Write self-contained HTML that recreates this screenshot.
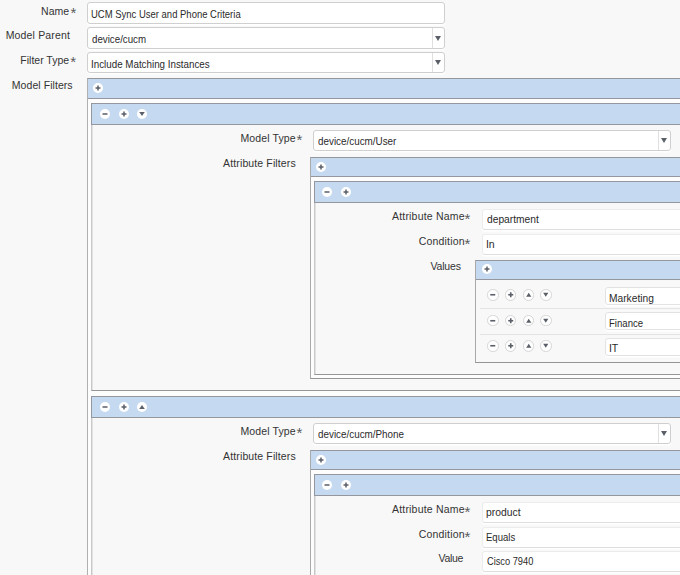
<!DOCTYPE html>
<html><head><meta charset="utf-8"><style>
html,body{margin:0;padding:0;}
body{width:680px;height:575px;overflow:hidden;position:relative;background:#f8f8f8;font-family:"Liberation Sans",sans-serif;}
body>div,body>span{position:absolute;box-sizing:border-box;}
.t{white-space:nowrap;line-height:1;}
.st{color:#5a5a5a;font-size:15px;line-height:1;white-space:nowrap;}
.inp{background:#fff;border:1px solid #cfcfcf;border-radius:3px;box-shadow:0 1px 0 #fff,0 2px 0 #fcfcfc;}
.box{width:700px;border:1px solid #a9a9a9;border-top-color:#94989e;border-right:none;}
.btn{background:#fff;border-radius:50%;}
.btn svg{display:block;}
.tri{width:0;height:0;border-left:3px solid transparent;border-right:3px solid transparent;border-top:5px solid #5b6068;}
</style></head><body>
<span class="t" style="left:41.10px;top:5.51px;font-size:10.5px;letter-spacing:0px;color:#333">Name</span>
<span class="st" style="left:70.40px;top:4.60px">*</span>
<span class="t" style="left:5.70px;top:30.11px;font-size:10.5px;letter-spacing:0.155px;color:#333">Model Parent</span>
<span class="t" style="left:20.30px;top:54.71px;font-size:10.5px;letter-spacing:0px;color:#333">Filter Type</span>
<span class="st" style="left:70.30px;top:53.90px">*</span>
<span class="t" style="left:11.80px;top:80.11px;font-size:10.5px;letter-spacing:0.058px;color:#333">Model Filters</span>
<div class="inp" style="left:87px;top:2px;width:358px;height:22px;border-color:#cfcfcf;"></div>
<span class="t" style="left:91.00px;top:9.01px;font-size:10.5px;color:#2a2a2a;transform:scaleX(0.903);transform-origin:0 0">UCM Sync User and Phone Criteria</span>
<div class="inp" style="left:87px;top:27px;width:358px;height:22px;border-color:#cfcfcf;"></div>
<div style="left:432px;top:28px;width:1px;height:20px;background:#e0e0e0"></div>
<div class="tri" style="left:435px;top:36px"></div>
<span class="t" style="left:91.90px;top:34.01px;font-size:10.5px;color:#2a2a2a;transform:scaleX(0.9267);transform-origin:0 0">device/cucm</span>
<div class="inp" style="left:87px;top:52px;width:358px;height:21px;border-color:#cfcfcf;"></div>
<div style="left:432px;top:53px;width:1px;height:19px;background:#e0e0e0"></div>
<div class="tri" style="left:435px;top:60px"></div>
<span class="t" style="left:90.97px;top:59.01px;font-size:10.5px;color:#2a2a2a;transform:scaleX(0.9325);transform-origin:0 0">Include Matching Instances</span>
<div class="box" style="left:87px;top:78px;height:700px;background:#fdfdfd;border-left-color:#b0b0b0;border-bottom-color:#959595;border-bottom:none;"></div>
<div style="left:88px;top:79px;width:700px;height:19px;background:#c5daf0"></div>
<div style="left:88px;top:98px;width:700px;height:1px;background:#94989e"></div>
<div class="btn" style="left:93.0px;top:83.0px;width:10px;height:10px;"><svg width="10" height="10"><rect x="2.5" y="4.25" width="5.0" height="1.5" fill="#5b6068"/><rect x="4.25" y="2.5" width="1.5" height="5.0" fill="#5b6068"/></svg></div>
<div class="box" style="left:91px;top:103px;height:288px;background:#f8f8f8;border-left-color:#c8c8c8;border-bottom-color:#969696;box-shadow:inset 1px 0 0 #e2e2e2;"></div>
<div style="left:92px;top:104px;width:700px;height:20px;background:#c5daf0"></div>
<div style="left:91px;top:103px;width:1px;height:22px;background:#94989e"></div>
<div style="left:92px;top:124px;width:700px;height:1px;background:#94989e"></div>
<div class="btn" style="left:100.0px;top:109.0px;width:10px;height:10px;"><svg width="10" height="10"><rect x="2.5" y="4.25" width="5.0" height="1.5" fill="#5b6068"/></svg></div>
<div class="btn" style="left:118.5px;top:109.0px;width:10px;height:10px;"><svg width="10" height="10"><rect x="2.5" y="4.25" width="5.0" height="1.5" fill="#5b6068"/><rect x="4.25" y="2.5" width="1.5" height="5.0" fill="#5b6068"/></svg></div>
<div class="btn" style="left:137.0px;top:109.0px;width:10px;height:10px;"><svg width="10" height="10"><path d="M2.2 3.0 L7.8 3.0 L5.0 7.0 Z" fill="#5b6068"/></svg></div>
<span class="t" style="left:240.50px;top:133.01px;font-size:10.5px;letter-spacing:0.12px;color:#333">Model Type</span>
<span class="st" style="left:296.40px;top:131.70px">*</span>
<div class="inp" style="left:313px;top:130px;width:358px;height:21px;border-color:#cfcfcf;"></div>
<div style="left:658px;top:131px;width:1px;height:19px;background:#e0e0e0"></div>
<div class="tri" style="left:661px;top:138px"></div>
<span class="t" style="left:318.30px;top:136.01px;font-size:10.5px;color:#2a2a2a;transform:scaleX(0.9386);transform-origin:0 0">device/cucm/User</span>
<span class="t" style="left:223.10px;top:158.01px;font-size:10.5px;letter-spacing:0.125px;color:#333">Attribute Filters</span>
<div class="box" style="left:310px;top:157px;height:222px;background:#fdfdfd;border-left-color:#a9a9a9;border-bottom-color:#959595;"></div>
<div style="left:311px;top:158px;width:700px;height:18px;background:#c5daf0"></div>
<div style="left:311px;top:176px;width:700px;height:1px;background:#94989e"></div>
<div class="btn" style="left:316.0px;top:161.5px;width:10px;height:10px;"><svg width="10" height="10"><rect x="2.5" y="4.25" width="5.0" height="1.5" fill="#5b6068"/><rect x="4.25" y="2.5" width="1.5" height="5.0" fill="#5b6068"/></svg></div>
<div class="box" style="left:314px;top:181px;height:194px;background:#f8f8f8;border-left-color:#c8c8c8;border-bottom-color:#969696;box-shadow:inset 1px 0 0 #e2e2e2;"></div>
<div style="left:315px;top:182px;width:700px;height:20px;background:#c5daf0"></div>
<div style="left:314px;top:181px;width:1px;height:22px;background:#94989e"></div>
<div style="left:315px;top:202px;width:700px;height:1px;background:#94989e"></div>
<div class="btn" style="left:322.0px;top:187.0px;width:10px;height:10px;"><svg width="10" height="10"><rect x="2.5" y="4.25" width="5.0" height="1.5" fill="#5b6068"/></svg></div>
<div class="btn" style="left:340.5px;top:187.0px;width:10px;height:10px;"><svg width="10" height="10"><rect x="2.5" y="4.25" width="5.0" height="1.5" fill="#5b6068"/><rect x="4.25" y="2.5" width="1.5" height="5.0" fill="#5b6068"/></svg></div>
<span class="t" style="left:392.00px;top:211.11px;font-size:10.5px;letter-spacing:0.19px;color:#333">Attribute Name</span>
<span class="st" style="left:464.50px;top:210.50px">*</span>
<div class="inp" style="left:482px;top:209px;width:300px;height:21px;border-color:#ececec;border-bottom-color:#dedede;"></div>
<span class="t" style="left:418.70px;top:235.81px;font-size:10.5px;letter-spacing:0.19px;color:#333">Condition</span>
<span class="st" style="left:464.50px;top:235.60px">*</span>
<div class="inp" style="left:482px;top:234px;width:300px;height:21px;border-color:#ececec;border-bottom-color:#dedede;"></div>
<span class="t" style="left:486.50px;top:213.91px;font-size:10.5px;color:#2a2a2a;transform:scaleX(0.9755);transform-origin:0 0">department</span>
<span class="t" style="left:485.90px;top:238.61px;font-size:10.5px;color:#2a2a2a;transform:scaleX(1.0);transform-origin:0 0">In</span>
<span class="t" style="left:430.50px;top:261.31px;font-size:10.5px;letter-spacing:-0.18px;color:#333">Values</span>
<div class="box" style="left:475px;top:260px;height:103px;background:#f8f8f8;border-left-color:#a9a9a9;border-bottom-color:#959595;"></div>
<div style="left:476px;top:261px;width:700px;height:18px;background:#c5daf0"></div>
<div style="left:476px;top:279px;width:700px;height:1px;background:#94989e"></div>
<div class="btn" style="left:481.6px;top:264.4px;width:10px;height:10px;"><svg width="10" height="10"><rect x="2.5" y="4.25" width="5.0" height="1.5" fill="#5b6068"/><rect x="4.25" y="2.5" width="1.5" height="5.0" fill="#5b6068"/></svg></div>
<div class="btn" style="left:487.25px;top:289.25px;width:11.5px;height:11.5px;border:1px solid #d6d6d6;"><svg width="9.5" height="9.5"><rect x="2.25" y="3.95" width="5.0" height="1.6" fill="#5b6068"/></svg></div>
<div class="btn" style="left:504.75px;top:289.25px;width:11.5px;height:11.5px;border:1px solid #d6d6d6;"><svg width="9.5" height="9.5"><rect x="2.25" y="3.95" width="5.0" height="1.6" fill="#5b6068"/><rect x="3.95" y="2.25" width="1.6" height="5.0" fill="#5b6068"/></svg></div>
<div class="btn" style="left:522.75px;top:289.25px;width:11.5px;height:11.5px;border:1px solid #d6d6d6;"><svg width="9.5" height="9.5"><path d="M2.15 6.75 L7.35 6.75 L4.75 2.75 Z" fill="#5b6068"/></svg></div>
<div class="btn" style="left:540.25px;top:289.25px;width:11.5px;height:11.5px;border:1px solid #d6d6d6;"><svg width="9.5" height="9.5"><path d="M2.15 2.75 L7.35 2.75 L4.75 6.75 Z" fill="#5b6068"/></svg></div>
<div class="inp" style="left:605px;top:287px;width:200px;height:18px;border-color:#e2e2e2;"></div>
<span class="t" style="left:608.93px;top:293.21px;font-size:10.5px;color:#2a2a2a;transform:scaleX(0.9733);transform-origin:0 0">Marketing</span>
<div class="btn" style="left:487.25px;top:314.55px;width:11.5px;height:11.5px;border:1px solid #d6d6d6;"><svg width="9.5" height="9.5"><rect x="2.25" y="3.95" width="5.0" height="1.6" fill="#5b6068"/></svg></div>
<div class="btn" style="left:504.75px;top:314.55px;width:11.5px;height:11.5px;border:1px solid #d6d6d6;"><svg width="9.5" height="9.5"><rect x="2.25" y="3.95" width="5.0" height="1.6" fill="#5b6068"/><rect x="3.95" y="2.25" width="1.6" height="5.0" fill="#5b6068"/></svg></div>
<div class="btn" style="left:522.75px;top:314.55px;width:11.5px;height:11.5px;border:1px solid #d6d6d6;"><svg width="9.5" height="9.5"><path d="M2.15 6.75 L7.35 6.75 L4.75 2.75 Z" fill="#5b6068"/></svg></div>
<div class="btn" style="left:540.25px;top:314.55px;width:11.5px;height:11.5px;border:1px solid #d6d6d6;"><svg width="9.5" height="9.5"><path d="M2.15 2.75 L7.35 2.75 L4.75 6.75 Z" fill="#5b6068"/></svg></div>
<div class="inp" style="left:605px;top:312px;width:200px;height:18px;border-color:#e2e2e2;"></div>
<span class="t" style="left:608.99px;top:317.71px;font-size:10.5px;color:#2a2a2a;transform:scaleX(0.9139);transform-origin:0 0">Finance</span>
<div class="btn" style="left:487.25px;top:340.05px;width:11.5px;height:11.5px;border:1px solid #d6d6d6;"><svg width="9.5" height="9.5"><rect x="2.25" y="3.95" width="5.0" height="1.6" fill="#5b6068"/></svg></div>
<div class="btn" style="left:504.75px;top:340.05px;width:11.5px;height:11.5px;border:1px solid #d6d6d6;"><svg width="9.5" height="9.5"><rect x="2.25" y="3.95" width="5.0" height="1.6" fill="#5b6068"/><rect x="3.95" y="2.25" width="1.6" height="5.0" fill="#5b6068"/></svg></div>
<div class="btn" style="left:522.75px;top:340.05px;width:11.5px;height:11.5px;border:1px solid #d6d6d6;"><svg width="9.5" height="9.5"><path d="M2.15 6.75 L7.35 6.75 L4.75 2.75 Z" fill="#5b6068"/></svg></div>
<div class="btn" style="left:540.25px;top:340.05px;width:11.5px;height:11.5px;border:1px solid #d6d6d6;"><svg width="9.5" height="9.5"><path d="M2.15 2.75 L7.35 2.75 L4.75 6.75 Z" fill="#5b6068"/></svg></div>
<div class="inp" style="left:605px;top:338px;width:200px;height:18px;border-color:#e2e2e2;"></div>
<span class="t" style="left:608.90px;top:343.01px;font-size:10.5px;color:#2a2a2a;transform:scaleX(1.0);transform-origin:0 0">IT</span>
<div style="left:480px;top:308px;width:300px;height:1px;background:#e4e4e4"></div>
<div style="left:480px;top:334px;width:300px;height:1px;background:#e4e4e4"></div>
<div class="box" style="left:91px;top:396px;height:700px;background:#f8f8f8;border-left-color:#c8c8c8;border-bottom-color:#969696;box-shadow:inset 1px 0 0 #e2e2e2;border-bottom:none;"></div>
<div style="left:92px;top:397px;width:700px;height:20px;background:#c5daf0"></div>
<div style="left:91px;top:396px;width:1px;height:22px;background:#94989e"></div>
<div style="left:92px;top:417px;width:700px;height:1px;background:#94989e"></div>
<div class="btn" style="left:100.0px;top:402.0px;width:10px;height:10px;"><svg width="10" height="10"><rect x="2.5" y="4.25" width="5.0" height="1.5" fill="#5b6068"/></svg></div>
<div class="btn" style="left:118.5px;top:402.0px;width:10px;height:10px;"><svg width="10" height="10"><rect x="2.5" y="4.25" width="5.0" height="1.5" fill="#5b6068"/><rect x="4.25" y="2.5" width="1.5" height="5.0" fill="#5b6068"/></svg></div>
<div class="btn" style="left:137.0px;top:402.0px;width:10px;height:10px;"><svg width="10" height="10"><path d="M2.2 7.0 L7.8 7.0 L5.0 3.0 Z" fill="#5b6068"/></svg></div>
<span class="t" style="left:240.50px;top:426.01px;font-size:10.5px;letter-spacing:0.12px;color:#333">Model Type</span>
<span class="st" style="left:296.40px;top:424.70px">*</span>
<div class="inp" style="left:313px;top:423px;width:358px;height:21px;border-color:#cfcfcf;"></div>
<div style="left:658px;top:424px;width:1px;height:19px;background:#e0e0e0"></div>
<div class="tri" style="left:661px;top:431px"></div>
<span class="t" style="left:318.30px;top:429.01px;font-size:10.5px;color:#2a2a2a;transform:scaleX(0.9386);transform-origin:0 0">device/cucm/Phone</span>
<span class="t" style="left:223.10px;top:451.01px;font-size:10.5px;letter-spacing:0.125px;color:#333">Attribute Filters</span>
<div class="box" style="left:310px;top:450px;height:700px;background:#fdfdfd;border-left-color:#a9a9a9;border-bottom-color:#959595;border-bottom:none;"></div>
<div style="left:311px;top:451px;width:700px;height:18px;background:#c5daf0"></div>
<div style="left:311px;top:469px;width:700px;height:1px;background:#94989e"></div>
<div class="btn" style="left:316.0px;top:454.5px;width:10px;height:10px;"><svg width="10" height="10"><rect x="2.5" y="4.25" width="5.0" height="1.5" fill="#5b6068"/><rect x="4.25" y="2.5" width="1.5" height="5.0" fill="#5b6068"/></svg></div>
<div class="box" style="left:314px;top:474px;height:700px;background:#f8f8f8;border-left-color:#c8c8c8;border-bottom-color:#969696;box-shadow:inset 1px 0 0 #e2e2e2;border-bottom:none;"></div>
<div style="left:315px;top:475px;width:700px;height:20px;background:#c5daf0"></div>
<div style="left:314px;top:474px;width:1px;height:22px;background:#94989e"></div>
<div style="left:315px;top:495px;width:700px;height:1px;background:#94989e"></div>
<div class="btn" style="left:322.0px;top:480.0px;width:10px;height:10px;"><svg width="10" height="10"><rect x="2.5" y="4.25" width="5.0" height="1.5" fill="#5b6068"/></svg></div>
<div class="btn" style="left:340.5px;top:480.0px;width:10px;height:10px;"><svg width="10" height="10"><rect x="2.5" y="4.25" width="5.0" height="1.5" fill="#5b6068"/><rect x="4.25" y="2.5" width="1.5" height="5.0" fill="#5b6068"/></svg></div>
<span class="t" style="left:392.00px;top:504.11px;font-size:10.5px;letter-spacing:0.19px;color:#333">Attribute Name</span>
<span class="st" style="left:464.50px;top:503.50px">*</span>
<div class="inp" style="left:482px;top:502px;width:300px;height:21px;border-color:#ececec;border-bottom-color:#dedede;"></div>
<span class="t" style="left:418.70px;top:528.81px;font-size:10.5px;letter-spacing:0.19px;color:#333">Condition</span>
<span class="st" style="left:464.50px;top:528.60px">*</span>
<div class="inp" style="left:482px;top:527px;width:300px;height:21px;border-color:#ececec;border-bottom-color:#dedede;"></div>
<span class="t" style="left:485.61px;top:507.41px;font-size:10.5px;color:#2a2a2a;transform:scaleX(0.9853);transform-origin:0 0">product</span>
<span class="t" style="left:485.69px;top:531.71px;font-size:10.5px;color:#2a2a2a;transform:scaleX(0.9097);transform-origin:0 0">Equals</span>
<span class="t" style="left:438.50px;top:553.11px;font-size:10.5px;letter-spacing:-0.325px;color:#333">Value</span>
<div class="inp" style="left:482px;top:551px;width:300px;height:21px;border-color:#ececec;border-bottom-color:#dedede;"></div>
<span class="t" style="left:486.60px;top:556.41px;font-size:10.5px;color:#2a2a2a;transform:scaleX(0.8808);transform-origin:0 0">Cisco 7940</span>
</body></html>
